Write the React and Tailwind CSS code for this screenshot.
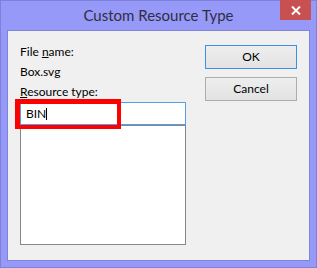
import React from 'react';

const FONT = { fontFamily: '"Segoe UI", Lato, "Noto Sans", sans-serif' };

export default function App() {
  return (
    <div className="w-[317px] h-[268px] flex flex-col border border-[#7d81dc] bg-[#9699f8] text-[12px] text-black" style={FONT}>
      {/* Title bar */}
      <div className="flex items-start h-[29px]">
        <div className="w-[36px]" />
        <div className="flex-1 text-center text-[15px] leading-[29px] text-[#2f2f3f]">Custom Resource Type</div>
        <button className="w-[31px] h-[20px] mr-[5px] -mt-px bg-[#c75050] flex items-center justify-center">
          <svg width="10" height="9" viewBox="0 0 10 9">
            <path d="M1 0.5 L9 8.5 M9 0.5 L1 8.5" stroke="white" strokeWidth="2" />
          </svg>
        </button>
      </div>

      {/* Client area */}
      <div className="relative mx-[6px] mb-[6px] flex-1 border border-[#8084d4] bg-[#f0f0f0] flex">
        <div className="pl-[12px] pt-[11px] w-[178px] flex flex-col">
          <div className="leading-[20px]">File <span className="underline">n</span>ame:</div>
          <div className="leading-[20px]">Box.svg</div>
          <div className="leading-[20px]"><span className="underline">R</span>esource type:</div>
          <div className="h-[23px] border border-[#569de5] bg-white flex items-center pl-[5px]">
            <span>BIN</span>
            <span className="w-px h-[12px] bg-black" />
          </div>
          <div className="h-[120px] border border-[#828790] bg-white" />
        </div>
        <div className="ml-[19px] pt-[14px] flex flex-col gap-[8px]">
          <button className="w-[92px] h-[24px] border border-[#3c8ee6] bg-gradient-to-b from-[#eeeeee] to-[#e3e3e3] leading-none">OK</button>
          <button className="w-[92px] h-[24px] border border-[#adadad] bg-gradient-to-b from-[#eeeeee] to-[#e3e3e3] leading-none">Cancel</button>
        </div>

        {/* red highlight */}
        <div className="absolute left-[7px] top-[68px] w-[106px] h-[30px] border-t-[5px] border-l-[5px] border-r-4 border-b-4 border-[#ff0000]" />
      </div>
    </div>
  );
}
